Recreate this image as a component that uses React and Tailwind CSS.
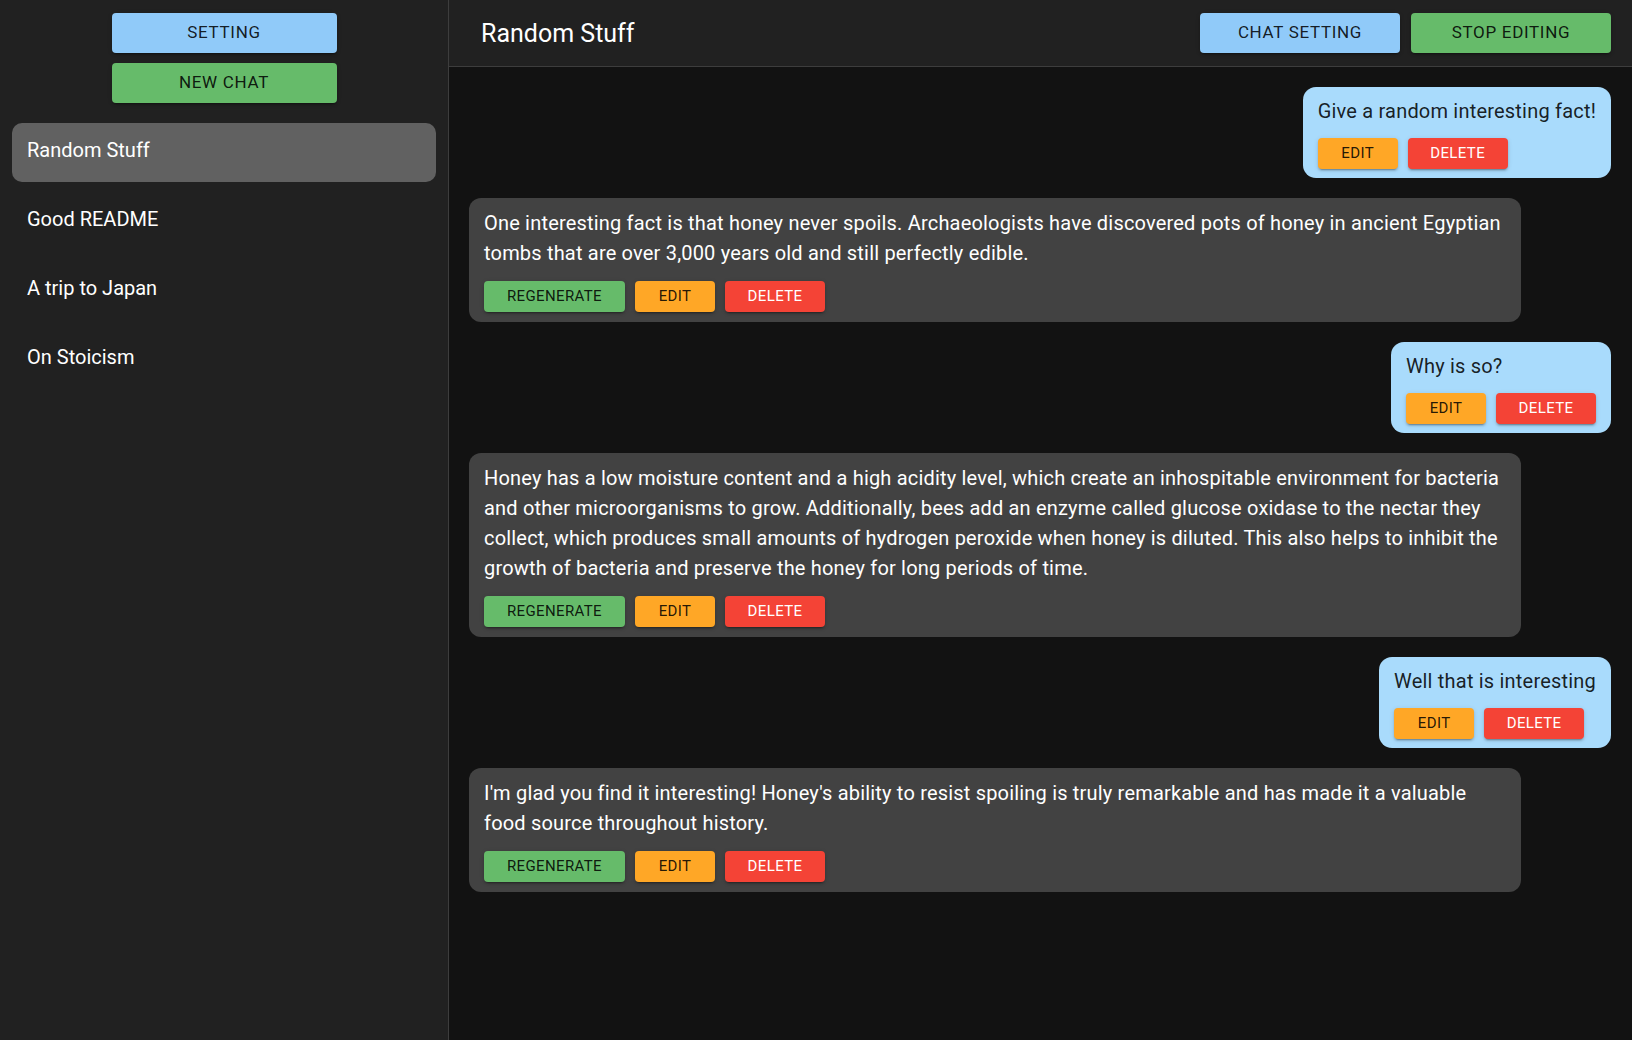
import React from "react";

const shadow = "shadow-[0px_3px_1px_-2px_rgba(0,0,0,0.2),0px_2px_2px_0px_rgba(0,0,0,0.14),0px_1px_5px_0px_rgba(0,0,0,0.12)]";

function Btn({ children, color, className = "" }) {
  const colors = {
    green: "bg-[#66bb6a] text-[rgba(0,0,0,0.87)]",
    orange: "bg-[#ffa726] text-[rgba(0,0,0,0.87)]",
    red: "bg-[#f44336] text-white",
    blue: "bg-[#90caf9] text-[rgba(0,0,0,0.87)]",
  };
  return (
    <button
      className={`${colors[color]} ${shadow} rounded-[4px] flex items-center justify-center uppercase ${className}`}
    >
      {children}
    </button>
  );
}

function SmallBtn({ children, color, w }) {
  return (
    <Btn color={color} className={`${w} h-[31px] text-[15px] tracking-[0.025em] font-normal`}>
      {children}
    </Btn>
  );
}

function BigBtn({ children, color, w }) {
  return (
    <Btn color={color} className={`${w} h-[40px] text-[17px] tracking-[0.04em] font-normal`}>
      {children}
    </Btn>
  );
}

function UserMsg({ text }) {
  return (
    <div className="flex justify-end">
      <div className="bg-[#a9dbfc] rounded-[13px] pt-[10px] pb-[9px] px-[15px] text-[rgba(0,0,0,0.87)]">
        <div className="text-[20px] leading-[29px] tracking-[0.01em] whitespace-nowrap">{text}</div>
        <div className="flex gap-[10px] mt-[12px]">
          <SmallBtn color="orange" w="w-[80px]">Edit</SmallBtn>
          <SmallBtn color="red" w="w-[100px]">Delete</SmallBtn>
        </div>
      </div>
    </div>
  );
}

function BotMsg({ text }) {
  return (
    <div className="flex justify-start">
      <div className="bg-[#424242] rounded-[12px] pt-[10px] pb-[10px] px-[15px] text-white w-[1052px]">
        <div className="text-[20px] leading-[30px] tracking-[0.00938em]">{text}</div>
        <div className="flex gap-[10px] mt-[13px]">
          <SmallBtn color="green" w="w-[141px]">Regenerate</SmallBtn>
          <SmallBtn color="orange" w="w-[80px]">Edit</SmallBtn>
          <SmallBtn color="red" w="w-[100px]">Delete</SmallBtn>
        </div>
      </div>
    </div>
  );
}

export default function App() {
  const chats = ["Random Stuff", "Good README", "A trip to Japan", "On Stoicism"];
  return (
    <div
      className="flex h-[1040px] w-[1632px] overflow-hidden bg-[#121212] text-white"
      style={{ fontFamily: "Roboto, 'Noto Sans', sans-serif" }}
    >
      <aside className="w-[449px] shrink-0 bg-[#212121] border-r border-[#3d3d3d] flex flex-col">
        <div className="flex flex-col items-center gap-[10px] pt-[13px]">
          <BigBtn color="blue" w="w-[225px]">Setting</BigBtn>
          <BigBtn color="green" w="w-[225px]">New Chat</BigBtn>
        </div>
        <div className="flex flex-col gap-[10px] px-[12px] mt-[20px]">
          {chats.map((c, i) => (
            <div
              key={c}
              className={`h-[59px] rounded-[10px] px-[15px] pb-[5px] flex items-center text-[20px] ${i === 0 ? "bg-[#616161]" : ""}`}
            >
              {c}
            </div>
          ))}
        </div>
      </aside>
      <main className="flex-1 flex flex-col min-w-0">
        <header className="h-[67px] shrink-0 bg-[#212121] border-b border-[#3d3d3d] flex items-center justify-between pl-[32px] pr-[21px]">
          <div className="text-[25px] leading-none">Random Stuff</div>
          <div className="flex gap-[11px]">
            <BigBtn color="blue" w="w-[200px]">Chat Setting</BigBtn>
            <BigBtn color="green" w="w-[200px]">Stop Editing</BigBtn>
          </div>
        </header>
        <div className="flex-1 overflow-auto pt-[20px] pl-[20px] pr-[21px] flex flex-col gap-[20px]">
          <UserMsg text="Give a random interesting fact!" />
          <BotMsg text="One interesting fact is that honey never spoils. Archaeologists have discovered pots of honey in ancient Egyptian tombs that are over 3,000 years old and still perfectly edible." />
          <UserMsg text="Why is so?" />
          <BotMsg text="Honey has a low moisture content and a high acidity level, which create an inhospitable environment for bacteria and other microorganisms to grow. Additionally, bees add an enzyme called glucose oxidase to the nectar they collect, which produces small amounts of hydrogen peroxide when honey is diluted. This also helps to inhibit the growth of bacteria and preserve the honey for long periods of time." />
          <UserMsg text="Well that is interesting" />
          <BotMsg text="I'm glad you find it interesting! Honey's ability to resist spoiling is truly remarkable and has made it a valuable food source throughout history." />
        </div>
      </main>
    </div>
  );
}
